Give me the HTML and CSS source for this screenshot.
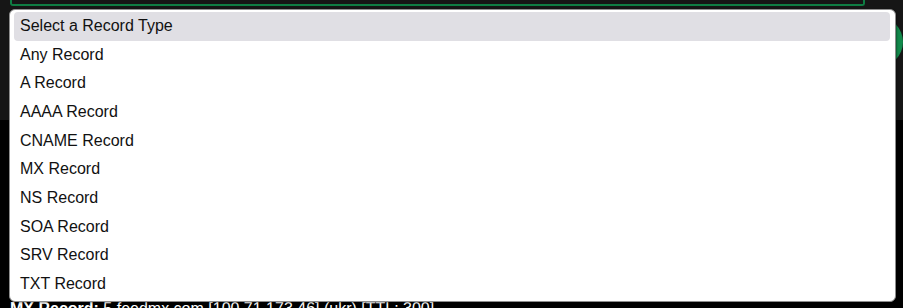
FILE: index.html
```html
<!DOCTYPE html>
<html>
<head>
<meta charset="utf-8">
<link rel="stylesheet" href="styles.css">
</head>
<body>
<div class="page">
  <header class="search-area">
    <div class="search-row">
      <div class="search-field"></div>
      <div class="search-btn"></div>
    </div>
  </header>
  <main class="results">
    <p class="result-line"><b>MX Record:</b> 5 feedmx.com [100.71.173.46] (ukr) [TTL: 300]</p>
  </main>
  <ul class="dropdown">
    <li class="option active">Select a Record Type</li>
    <li class="option">Any Record</li>
    <li class="option">A Record</li>
    <li class="option">AAAA Record</li>
    <li class="option">CNAME Record</li>
    <li class="option">MX Record</li>
    <li class="option">NS Record</li>
    <li class="option">SOA Record</li>
    <li class="option">SRV Record</li>
    <li class="option">TXT Record</li>
  </ul>
</div>
</body>
</html>
```
FILE: styles.css
```css
html, body {
  margin: 0;
  padding: 0;
  background: #000;
  font-family: "Liberation Sans", Arial, sans-serif;
  overflow: hidden;
}
.page {
  position: relative;
  width: 903px;
  height: 308px;
  overflow: hidden;
}
.search-area {
  height: 120px;
  background: #161616;
  overflow: hidden;
}
.search-row {
  display: flex;
  align-items: flex-start;
  padding-left: 10px;
}
.search-field {
  width: 882px;
  height: 4px;
  border: 2px solid #0f7d43;
  border-top: none;
  border-radius: 0 0 3px 3px;
}
.search-btn {
  flex: none;
  width: 50px;
  height: 50px;
  margin-top: 17px;
  margin-left: -12px;
  border-radius: 50%;
  background: #12894b;
}
.results {
  padding: 180px 0 0 10px;
}
.result-line {
  margin: 0;
  color: #fff;
  font-size: 16px;
  line-height: 18px;
  white-space: nowrap;
}
.dropdown {
  position: absolute;
  left: 9px;
  top: 9px;
  width: 876px;
  margin: 0;
  padding: 2px 5px 2px 4px;
  list-style: none;
  background: #fff;
  border: 1px solid #8d8d8d;
  border-radius: 6px;
  box-shadow: 1px 1px 2px rgba(0,0,0,0.35);
}
.option {
  padding: 5px 6px;
  line-height: 18.67px;
  font-size: 16px;
  color: #111;
  border-radius: 4px;
}
.option.active {
  background: #e0dfe4;
}
```
